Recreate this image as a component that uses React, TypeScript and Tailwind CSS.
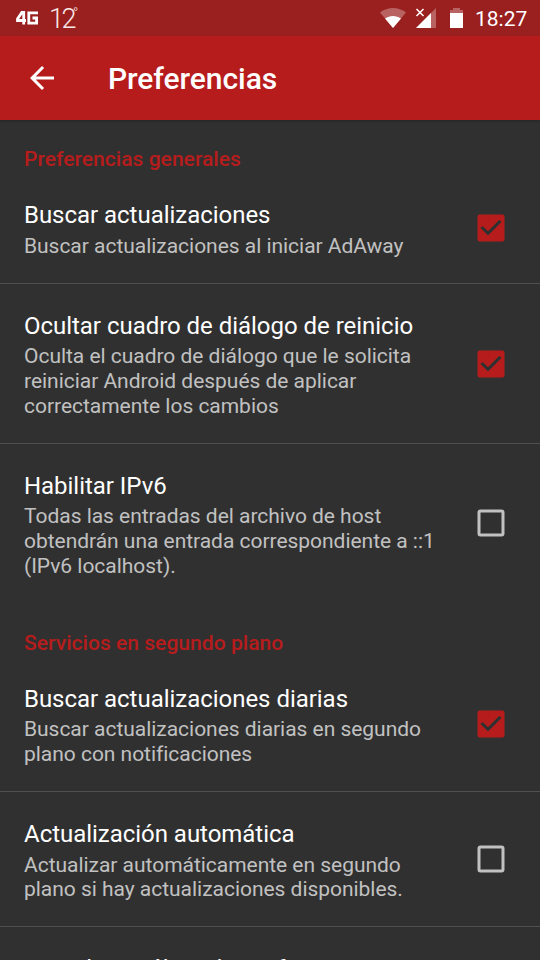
import type { ReactNode } from "react";

function CheckBox({ checked }: { checked?: boolean }) {
	return (
		<svg className="mb-[2px] ml-auto h-9 w-9 shrink-0" viewBox="0 0 24 24">
			{checked ? (
				<>
					<rect x="3" y="3" width="18" height="18" rx="1.5" fill="#b71c1c" />
					<path d="M10 17 5 12l1.41-1.41L10 14.17l7.59-7.59L19 8z" fill="#303030" />
				</>
			) : (
				<rect x="4" y="4" width="16" height="16" rx="1" fill="none" stroke="#c1c1c1" strokeWidth="2" />
			)}
		</svg>
	);
}

function Category({ children }: { children: ReactNode }) {
	return (
		<h2 className="h-[53.2px] shrink-0 px-6 pt-[27.2px] text-[21px] leading-[25px] font-medium tracking-[0.04px] text-[#b71c1c]">
			{children}
		</h2>
	);
}

function Title({ children }: { children: ReactNode }) {
	return <p className="h-[33.6px] text-[24px] leading-[30px] tracking-[-0.03px] text-white">{children}</p>;
}

type PreferenceProps = {
	title: string;
	lines: string[];
	checked?: boolean;
	last?: boolean;
};

function Preference({ title, lines, checked, last }: PreferenceProps) {
	return (
		<div
			className={`flex shrink-0 items-center border-b pt-[27px] pb-[24.5px] pl-6 pr-[31px] ${last ? "border-transparent" : "border-[#505050]"}`}
		>
			<div className="whitespace-nowrap">
				<Title>{title}</Title>
				{lines.map((line) => (
					<p key={line} className="text-[21px] leading-[24.6px] tracking-[-0.03px] text-[#c1c1c1]">
						{line}
					</p>
				))}
			</div>
			<CheckBox checked={checked} />
		</div>
	);
}

function StatusBar() {
	return (
		<div className="flex h-9 shrink-0 items-center bg-[#9a1f1f] text-white">
			<svg className="ml-4 h-[14px] w-[22px]" viewBox="0 0 22 14" fill="none" stroke="#fff" strokeWidth="2.8">
				<path d="M6.8 0 1.5 8v1.5H10M7.7 0v13.5M22 1.9H12.8v10.2h7.8V7H16.5" />
			</svg>
			<div className="ml-[11px] flex h-6 items-start font-light text-[#f8e8e8]">
				<span className="text-[27px] leading-[26px] tracking-[-2.5px]">12</span>
				<span className="ml-[-1px] text-[14px] leading-[14px]">°</span>
			</div>
			<svg className="ml-auto h-5 w-[26px]" viewBox="0 0 26 20">
				<path d="M13 20 0 4.5C7.5-1.5 18.5-1.5 26 4.5Z" fill="#fff" opacity=".3" />
				<path d="M13 20 5 10.5c4.8-3.5 11.2-3.5 16 0Z" fill="#fff" />
			</svg>
			<svg className="ml-[9px] h-5 w-[21px]" viewBox="0 0 21 20">
				<path d="M21 0v20H1Z" fill="#fff" opacity=".3" />
				<path d="M16 5v15H1Z" fill="#fff" />
				<path d="m1.5 1 7 7m0-7-7 7" stroke="#fff" strokeWidth="1.5" />
			</svg>
			<svg className="ml-[14px] h-5 w-[13px]" viewBox="0 0 13 20">
				<path d="M3 0h7v2h3v3H0V2h3Z" fill="#fff" opacity=".3" />
				<path d="M0 5h13v15H0Z" fill="#fff" />
			</svg>
			<span className="mr-[12px] ml-[12px] w-[53px] pt-[2px] text-[21px] leading-6">18:27</span>
		</div>
	);
}

export default function App() {
	return (
		<div className="flex h-[960px] w-[540px] flex-col overflow-hidden bg-[#303030] font-[Roboto,sans-serif]">
			<StatusBar />
			<header className="flex h-[84px] shrink-0 items-center bg-[#b71c1c] pl-6 text-white">
				<svg className="h-9 w-9" viewBox="0 0 24 24" fill="#fff">
					<path d="M20 11H7.83l5.59-5.59L12 4l-8 8 8 8 1.41-1.41L7.83 13H20v-2z" />
				</svg>
				<h1 className="ml-12 pt-[2px] text-[30px] leading-9 font-medium tracking-[-0.06px]">Preferencias</h1>
			</header>
			<main className="flex min-h-0 flex-1 flex-col overflow-hidden shadow-[inset_0_3px_3px_-2px_#242424]">
				<Category>Preferencias generales</Category>
				<Preference title="Buscar actualizaciones" lines={["Buscar actualizaciones al iniciar AdAway"]} checked />
				<Preference
					title="Ocultar cuadro de diálogo de reinicio"
					lines={[
						"Oculta el cuadro de diálogo que le solicita",
						"reiniciar Android después de aplicar",
						"correctamente los cambios",
					]}
					checked
				/>
				<Preference
					title="Habilitar IPv6"
					lines={[
						"Todas las entradas del archivo de host",
						"obtendrán una entrada correspondiente a ::1",
						"(IPv6 localhost).",
					]}
					last
				/>
				<Category>Servicios en segundo plano</Category>
				<Preference
					title="Buscar actualizaciones diarias"
					lines={["Buscar actualizaciones diarias en segundo", "plano con notificaciones"]}
					checked
				/>
				<Preference
					title="Actualización automática"
					lines={["Actualizar automáticamente en segundo", "plano si hay actualizaciones disponibles."]}
				/>
				<div className="shrink-0 px-6 pt-[27px]">
					<Title>Actualizar sólo redes wifi</Title>
				</div>
			</main>
		</div>
	);
}
